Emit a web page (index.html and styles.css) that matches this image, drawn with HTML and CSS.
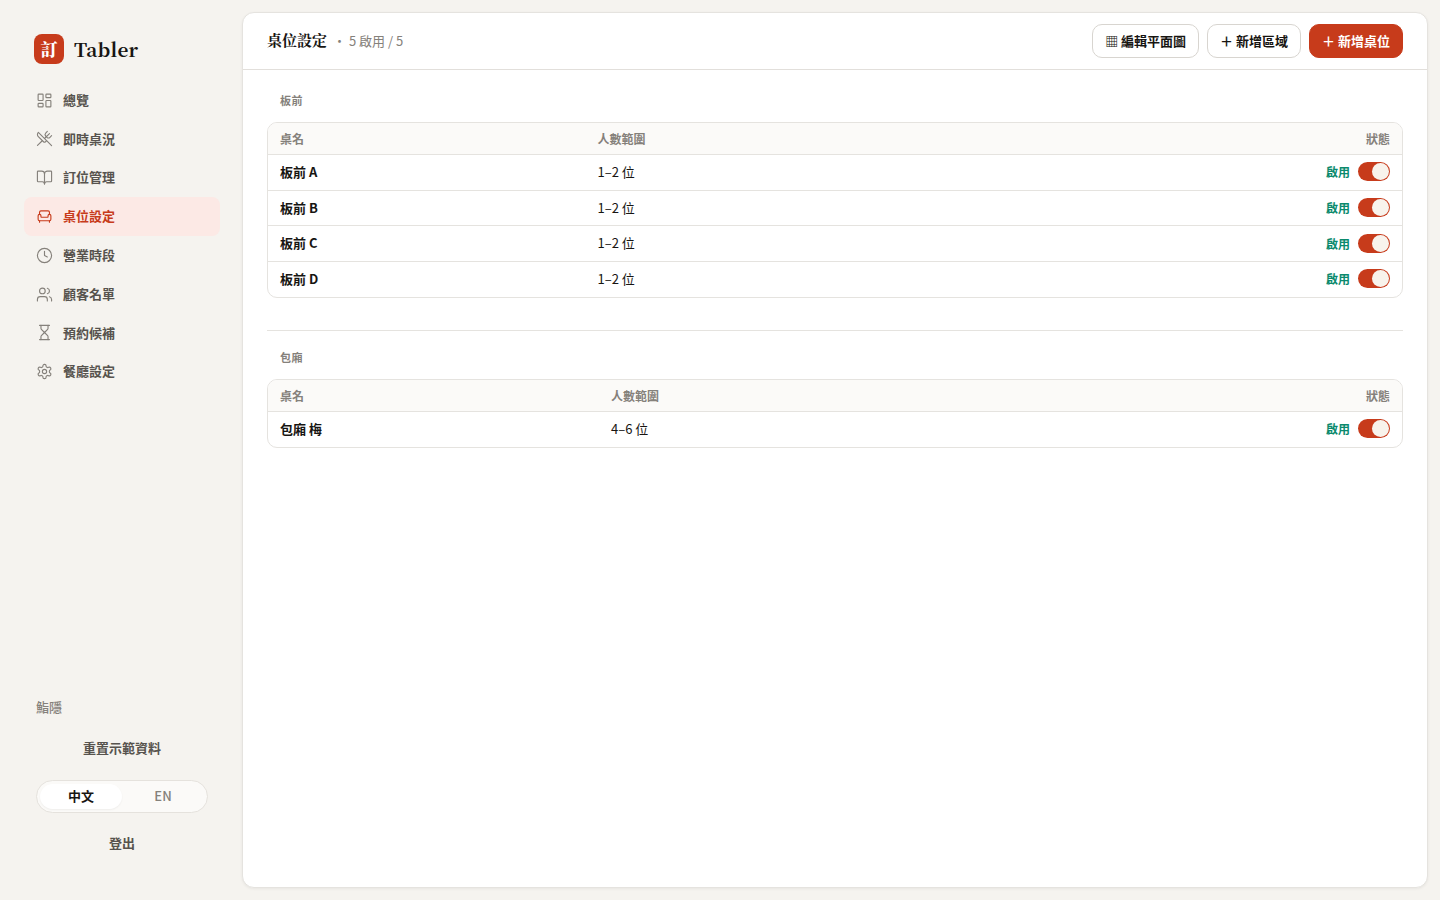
FILE: index.html
```
<!DOCTYPE html>
<html lang="zh-Hant">
	<head>
		<meta charset="utf-8" />
		<title>Tabler 桌位設定</title>
		<link rel="stylesheet" href="styles.css">
	</head>
	<body>
		<!--側邊欄-->
		<aside class="sidebar">
			<div class="brand">
				<span class="brand-mark">訂</span>
				<span class="brand-name">Tabler</span>
			</div>
			<nav class="nav">
				<a class="nav-item">
					<svg class="icon" viewBox="0 0 24 24"><rect x="3" y="3" width="7" height="9" rx="1"/><rect x="14" y="3" width="7" height="5" rx="1"/><rect x="14" y="12" width="7" height="9" rx="1"/><rect x="3" y="16" width="7" height="5" rx="1"/></svg>
					<span>總覽</span>
				</a>
				<a class="nav-item">
					<svg class="icon" viewBox="0 0 24 24"><path d="m16 2-2.3 2.3a3 3 0 0 0 0 4.2l1.8 1.8a3 3 0 0 0 4.2 0L22 8"/><path d="M15 15 3.3 3.3a4.2 4.2 0 0 0 0 6l7.3 7.3c.7.7 2 .7 2.8 0L15 15Zm0 0 7 7"/><path d="m2.1 21.8 6.4-6.3"/><path d="m19 5-7 7"/></svg>
					<span>即時桌況</span>
				</a>
				<a class="nav-item">
					<svg class="icon" viewBox="0 0 24 24"><path d="M12 7v14"/><path d="M3 18a1 1 0 0 1-1-1V4a1 1 0 0 1 1-1h5a4 4 0 0 1 4 4 4 4 0 0 1 4-4h5a1 1 0 0 1 1 1v13a1 1 0 0 1-1 1h-6a3 3 0 0 0-3 3 3 3 0 0 0-3-3z"/></svg>
					<span>訂位管理</span>
				</a>
				<a class="nav-item current">
					<svg class="icon" viewBox="0 0 24 24"><path d="M19 9V6a2 2 0 0 0-2-2H7a2 2 0 0 0-2 2v3"/><path d="M3 16a2 2 0 0 0 2 2h14a2 2 0 0 0 2-2v-5a2 2 0 0 0-4 0v1.5a.5.5 0 0 1-.5.5h-9a.5.5 0 0 1-.5-.5V11a2 2 0 0 0-4 0z"/><path d="M5 18v2"/><path d="M19 18v2"/></svg>
					<span>桌位設定</span>
				</a>
				<a class="nav-item">
					<svg class="icon" viewBox="0 0 24 24"><circle cx="12" cy="12" r="10"/><path d="M12 6v6l4 2"/></svg>
					<span>營業時段</span>
				</a>
				<a class="nav-item">
					<svg class="icon" viewBox="0 0 24 24"><path d="M16 21v-2a4 4 0 0 0-4-4H6a4 4 0 0 0-4 4v2"/><circle cx="9" cy="7" r="4"/><path d="M22 21v-2a4 4 0 0 0-3-3.870"/><path d="M16 3.130a4 4 0 0 1 0 7.750"/></svg>
					<span>顧客名單</span>
				</a>
				<a class="nav-item">
					<svg class="icon" viewBox="0 0 24 24"><path d="M5 22h14"/><path d="M5 2h14"/><path d="M17 22v-4.172a2 2 0 0 0-.586-1.414L12 12l-4.414 4.414A2 2 0 0 0 7 17.828V22"/><path d="M7 2v4.172a2 2 0 0 0 .586 1.414L12 12l4.414-4.414A2 2 0 0 0 17 6.172V2"/></svg>
					<span>預約候補</span>
				</a>
				<a class="nav-item">
					<svg class="icon" viewBox="0 0 24 24"><path d="M12.22 2h-.44a2 2 0 0 0-2 2v.18a2 2 0 0 1-1 1.73l-.43.25a2 2 0 0 1-2 0l-.15-.08a2 2 0 0 0-2.73.73l-.22.38a2 2 0 0 0 .73 2.73l.15.1a2 2 0 0 1 1 1.72v.51a2 2 0 0 1-1 1.74l-.15.09a2 2 0 0 0-.73 2.73l.22.38a2 2 0 0 0 2.73.73l.15-.08a2 2 0 0 1 2 0l.43.25a2 2 0 0 1 1 1.73V20a2 2 0 0 0 2 2h.44a2 2 0 0 0 2-2v-.18a2 2 0 0 1 1-1.73l.43-.25a2 2 0 0 1 2 0l.15.08a2 2 0 0 0 2.73-.73l.22-.39a2 2 0 0 0-.73-2.73l-.15-.08a2 2 0 0 1-1-1.74v-.5a2 2 0 0 1 1-1.74l.15-.09a2 2 0 0 0 .73-2.73l-.22-.38a2 2 0 0 0-2.73-.73l-.15.08a2 2 0 0 1-2 0l-.43-.25a2 2 0 0 1-1-1.73V4a2 2 0 0 0-2-2z"/><circle cx="12" cy="12" r="3"/></svg>
					<span>餐廳設定</span>
				</a>
			</nav>
			<div class="sidebar-foot">
				<p class="shop">鮨隱</p>
				<button class="link">重置示範資料</button>
				<div class="lang">
					<button class="lang-btn current">中文</button>
					<button class="lang-btn">EN</button>
				</div>
				<button class="link">登出</button>
			</div>
		</aside>

		<!--主要內容-->
		<main class="panel">
			<header class="panel-head">
				<h1>桌位設定</h1>
				<span class="count">・ 5 啟用 / 5</span>
				<div class="actions">
					<button class="btn">▦ 編輯平面圖</button>
					<button class="btn">＋ 新增區域</button>
					<button class="btn primary">＋ 新增桌位</button>
				</div>
			</header>
			<div class="panel-body">
				<section class="area">
					<h2>板前</h2>
					<div class="table-wrap">
						<table class="counter">
							<thead>
								<tr><th class="name">桌名</th><th>人數範圍</th><th class="state">狀態</th></tr>
							</thead>
							<tbody>
								<tr><td class="name">板前 A</td><td>1–2 位</td><td class="state"><div class="status">啟用<i class="switch"></i></div></td></tr>
								<tr><td class="name">板前 B</td><td>1–2 位</td><td class="state"><div class="status">啟用<i class="switch"></i></div></td></tr>
								<tr><td class="name">板前 C</td><td>1–2 位</td><td class="state"><div class="status">啟用<i class="switch"></i></div></td></tr>
								<tr><td class="name">板前 D</td><td>1–2 位</td><td class="state"><div class="status">啟用<i class="switch"></i></div></td></tr>
							</tbody>
						</table>
					</div>
				</section>
				<section class="area">
					<h2>包廂</h2>
					<div class="table-wrap">
						<table class="room">
							<thead>
								<tr><th class="name">桌名</th><th>人數範圍</th><th class="state">狀態</th></tr>
							</thead>
							<tbody>
								<tr><td class="name">包廂 梅</td><td>4–6 位</td><td class="state"><div class="status">啟用<i class="switch"></i></div></td></tr>
							</tbody>
						</table>
					</div>
				</section>
			</div>
		</main>
	</body>
</html>
```
FILE: styles.css
```
*{
	box-sizing: border-box;
}
body,h1,h2,p,button{
	margin: 0;
	padding: 0;
}
body{
	display: flex;
	height: 100vh;
	padding: 12px;
	background: #f5f3ef;
	color: #171512;
	font-family: "Noto Sans CJK TC", sans-serif;
	font-size: 13px;
	line-height: 1.6;
	overflow: hidden;
}
button{
	border: 0;
	background: none;
	color: inherit;
	font: inherit;
}
/* 側邊欄 */
.sidebar{
	display: flex;
	flex-direction: column;
	width: 230px;
	padding: 22px 22px 24px 12px;
}
.brand{
	display: flex;
	align-items: center;
	gap: 10px;
	height: 30px;
	margin: 0 10px 16.8px;
	font-family: "Noto Serif CJK TC", "Noto Serif TC", "Noto Serif", serif;
	font-weight: 900;
}
.brand-mark{
	width: 30px;
	height: 30px;
	border-radius: 8px;
	background: #c73b1b;
	color: #fff;
	font-size: 17px;
	line-height: 30px;
	text-align: center;
}
.brand-name{
	font-size: 19px;
	font-weight: 700;
	letter-spacing: .2px;
}
.nav-item{
	display: flex;
	align-items: center;
	gap: 10px;
	height: 38.8px;
	padding: 0 12px;
	border-radius: 8px;
	color: #57534e;
	font-weight: 700;
}
.nav-item.current{
	background: #fce9e5;
	color: #c73b1b;
}
.icon{
	width: 17px;
	height: 17px;
	fill: none;
	stroke: #85817b;
	stroke-width: 1.6;
	stroke-linecap: round;
	stroke-linejoin: round;
}
.nav-item.current .icon{
	stroke: #c73b1b;
}
.sidebar-foot{
	display: flex;
	flex-direction: column;
	margin-top: auto;
	padding: 0 12px;
}
.shop{
	margin-bottom: 10px;
	color: #85817b;
	font-weight: 500;
}
.link{
	height: 41px;
	color: #57534e;
	font-weight: 700;
}
.lang{
	display: flex;
	height: 33px;
	margin: 11px 0 10px;
	padding: 3px;
	border: 1px solid #e5e2dd;
	border-radius: 17px;
	background: #fbfaf8;
}
.lang-btn{
	flex: 1;
	border-radius: 13px;
	color: #85817b;
	font-weight: 500;
}
.lang-btn.current{
	background: #fff;
	color: #171512;
	font-weight: 700;
	box-shadow: 0 1px 2px rgba(0,0,0,.05);
}
/* 主要內容 */
.panel{
	flex: 1;
	border: 1px solid #e5e3df;
	border-radius: 12px;
	background: #fff;
	box-shadow: 0 1px 3px rgba(0,0,0,.06);
}
.panel-head{
	display: flex;
	align-items: center;
	height: 57px;
	padding: 0 24px;
	border-bottom: 1px solid #e2dfdb;
}
.panel-head h1{
	padding-bottom: 2px;
	font-family: "Noto Serif CJK TC", "Noto Serif TC", "Noto Serif CJK SC", serif;
	font-size: 15px;
	font-weight: 700;
}
.count{
	margin-left: 6px;
	color: #85817b;
}
.actions{
	display: flex;
	gap: 8px;
	margin-left: auto;
}
.btn{
	height: 34px;
	padding: 0 12px;
	border: 1px solid #d8d5d0;
	border-radius: 10px;
	background: #fff;
	font-weight: 700;
}
.btn.primary{
	border-color: #c73b1b;
	background: #c73b1b;
	color: #fff;
}
.panel-body{
	padding: 20px 24px;
}
.area + .area{
	margin-top: 32px;
	padding-top: 16px;
	border-top: 1px solid #e5e3df;
}
.area h2{
	height: 22px;
	margin-bottom: 10px;
	padding-left: 13px;
	color: #85817b;
	font-size: 11px;
	font-weight: 700;
	letter-spacing: .4px;
	line-height: 20px;
}
.table-wrap{
	border: 1px solid #e5e3df;
	border-radius: 10px;
	overflow: hidden;
}
table{
	width: 100%;
	border-collapse: separate;
	border-spacing: 0;
	table-layout: fixed;
}
th,td{
	height: 35.7px;
	padding: 0 12px;
	border-top: 1px solid #e5e3df;
	text-align: left;
}
th{
	height: 31px;
	border-top: 0;
	background: #fbfaf8;
	color: #85817b;
	font-size: 12px;
	font-weight: 700;
}
td.name{
	font-weight: 700;
}
.counter th.name{
	width: 317.5px;
}
.room th.name{
	width: 331px;
}
.room td{
	height: 36px;
}
.state{
	text-align: right;
}
.status{
	display: flex;
	align-items: center;
	justify-content: flex-end;
	gap: 8px;
	padding-bottom: 1px;
	color: #0b8a6d;
	font-size: 12px;
	font-weight: 700;
}
.switch{
	display: flex;
	justify-content: flex-end;
	width: 32px;
	height: 19px;
	padding: 1px;
	border-radius: 10px;
	background: #c73b1b;
}
.switch:after{
	content: "";
	width: 17px;
	height: 17px;
	border-radius: 50%;
	background: #f8f3ec;
}
```
